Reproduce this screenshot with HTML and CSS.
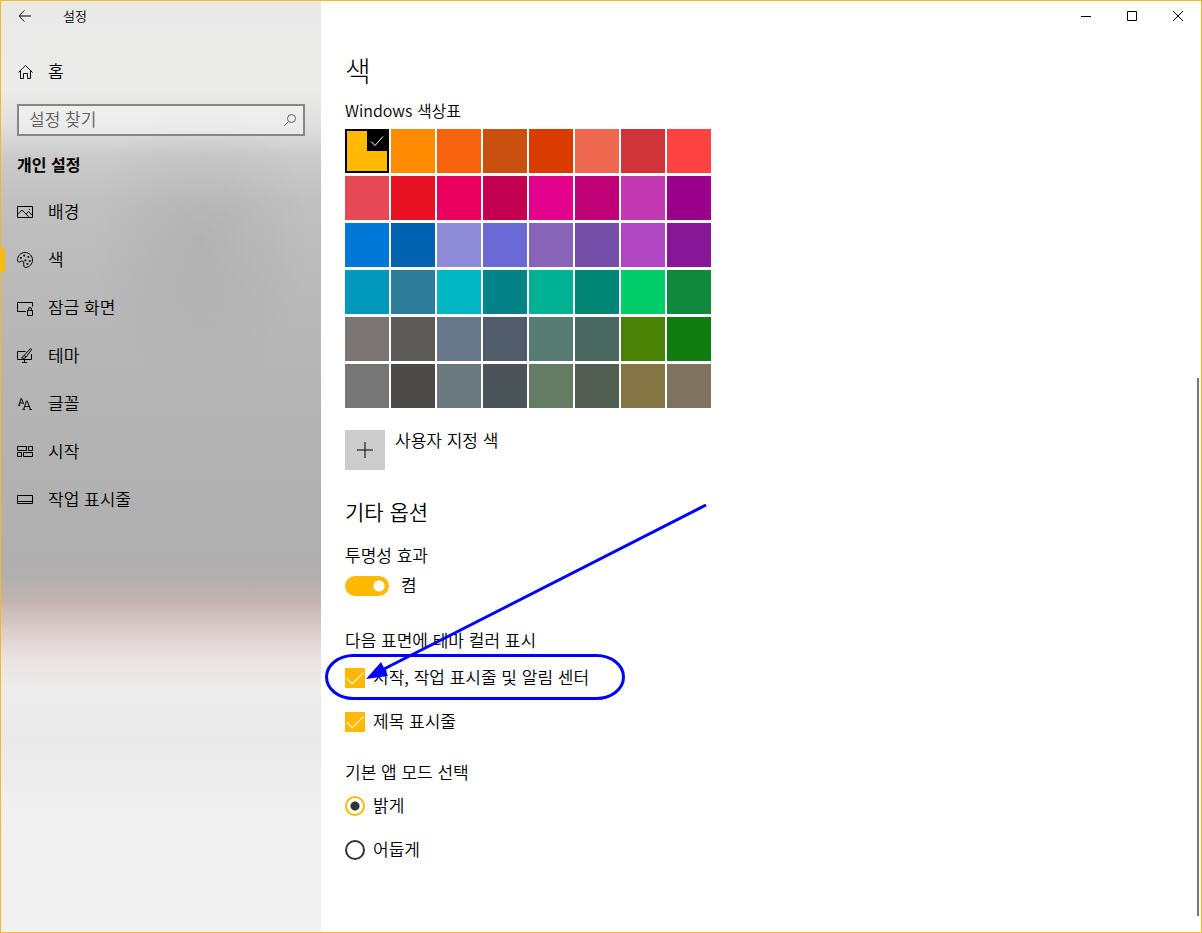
FILE: index.html
```html
<!DOCTYPE html>
<html lang="ko">
<head>
<meta charset="utf-8">
<meta name="viewport" content="width=device-width, initial-scale=1">
<title>설정</title>
<link rel="stylesheet" href="styles.css">
</head>
<body>
<div class="window">
  <aside class="sidebar">
    <header class="app-bar">
      <button class="back" type="button" aria-label="뒤로">
        <svg width="14" height="12" viewBox="0 0 14 12"><path d="M13 6H1M6.500 .5L1 6l5.500 5.500"/></svg>
      </button>
      <span class="app-name">설정</span>
    </header>
    <a class="nav-item home" href="#">
      <svg class="icon" width="16" height="16" viewBox="0 0 16 16"><path d="M1.500 8.500L8.500 1.500l7 7M3.500 7v7.500h3v-5h4v5h3V7"/></svg>
      <span>홈</span>
    </a>
    <div class="search">
      <input class="search-box" type="text" placeholder="설정 찾기" aria-label="설정 찾기">
      <svg class="search-icon" width="14" height="14" viewBox="0 0 14 14"><circle cx="8.500" cy="5.500" r="4"/><path d="M5.500 8.500L1 13"/></svg>
    </div>
    <h2 class="nav-title">개인 설정</h2>
    <nav class="nav">
      <a class="nav-item" href="#">
        <svg class="icon" width="16" height="16" viewBox="0 0 16 16"><path d="M.5 2.500h15v11H.5zM1 10l4-4 7.500 7.500M9 10l2.500-2.500 4 4"/><path d="M12 5.500h1"/></svg>
        <span>배경</span>
      </a>
      <a class="nav-item current" href="#" aria-current="page">
        <svg class="icon" width="16" height="16" viewBox="0 0 16 16"><path d="M8.500 15.500c4-.3 7-3.500 7-7.500S12.300.5 8 .5.500 4 .5 8c0 1.500.8 2.300 2 2l2-.8c1.500-.5 2.500.3 2.300 1.800-.3 2 0 4.500 1.700 4.500z"/><path class="solid" d="M3 5h1.800v1.800H3zM6.300 2.800h1.800v1.800H6.300zM10.500 4h1.800v1.800h-1.800zM7.500 7.500h1.800v1.800H7.500zM11.800 8h1.800v1.800h-1.800zM9.500 11h1.800v1.800H9.500z"/></svg>
        <span>색</span>
      </a>
      <a class="nav-item" href="#">
        <svg class="icon" width="16" height="16" viewBox="0 0 16 16"><path d="M9 11.500H.5v-9h15v4M10.500 10.500h5v5h-5zM11.500 10.500v-1.500a1.500 1.500 0 0 1 3 0v1.500"/></svg>
        <span>잠금 화면</span>
      </a>
      <a class="nav-item" href="#">
        <svg class="icon" width="16" height="16" viewBox="0 0 16 16"><path d="M8.500 3.500h-8v8h14V6M7.500 12v2.500M5 14.500h5"/><path d="M7 7.500l6-6.500c1-.8 2 .2 1.300 1.200L9 9M7 7.500L9 9c-.5 1.500-2.500 1.500-4.500 1 1.300-.3 1.200-2 2.500-2.500z"/></svg>
        <span>테마</span>
      </a>
      <a class="nav-item" href="#">
        <svg class="icon" width="16" height="16" viewBox="0 0 16 16"><path d="M1 9.500h2M1.800 9.500L4.300 2l2.200 6M2.700 7h3"/><path d="M5.500 13.500h2.500M12 13.500h3M6.500 13.500l3-8.500h.8l3.200 8.500M8 10.500h4.300"/></svg>
        <span>글꼴</span>
      </a>
      <a class="nav-item" href="#">
        <svg class="icon" width="16" height="16" viewBox="0 0 16 16"><path d="M.5 2.500h9v4h-9zM11.500 2.500h4v4h-4zM.5 8.500h4v4h-4zM6.500 8.500h9v4h-9z"/></svg>
        <span>시작</span>
      </a>
      <a class="nav-item" href="#">
        <svg class="icon" width="16" height="16" viewBox="0 0 16 16"><path d="M.5 3.500h15v8H.5zM.5 9.500h15"/></svg>
        <span>작업 표시줄</span>
      </a>
    </nav>
  </aside>

  <div class="content">
    <div class="window-controls">
      <button type="button" aria-label="최소화"><svg width="10" height="10" viewBox="0 0 10 10"><path d="M0 5.500h10"/></svg></button>
      <button type="button" aria-label="최대화"><svg width="10" height="10" viewBox="0 0 10 10"><path d="M.5 .5h9v9h-9z"/></svg></button>
      <button type="button" aria-label="닫기"><svg width="10" height="10" viewBox="0 0 10 10"><path d="M0 0l10 10M10 0L0 10"/></svg></button>
    </div>
    <main class="page">
      <h1 class="page-title">색</h1>
      <h3 class="label palette-label">Windows 색상표</h3>
      <div class="palette">
        <button class="swatch selected" type="button" aria-label="색 1" aria-pressed="true" style="background-color:#ffb900"><svg class="tick" width="20" height="20" viewBox="0 0 20 20"><path d="M4 10.500l4 4 8-9"/></svg></button>
        <button class="swatch" type="button" aria-label="색 2" style="background-color:#ff8c00"></button>
        <button class="swatch" type="button" aria-label="색 3" style="background-color:#f7630c"></button>
        <button class="swatch" type="button" aria-label="색 4" style="background-color:#ca5010"></button>
        <button class="swatch" type="button" aria-label="색 5" style="background-color:#da3b01"></button>
        <button class="swatch" type="button" aria-label="색 6" style="background-color:#ef6950"></button>
        <button class="swatch" type="button" aria-label="색 7" style="background-color:#d13438"></button>
        <button class="swatch" type="button" aria-label="색 8" style="background-color:#ff4343"></button>
        <button class="swatch" type="button" aria-label="색 9" style="background-color:#e74856"></button>
        <button class="swatch" type="button" aria-label="색 10" style="background-color:#e81123"></button>
        <button class="swatch" type="button" aria-label="색 11" style="background-color:#ea005e"></button>
        <button class="swatch" type="button" aria-label="색 12" style="background-color:#c30052"></button>
        <button class="swatch" type="button" aria-label="색 13" style="background-color:#e3008c"></button>
        <button class="swatch" type="button" aria-label="색 14" style="background-color:#bf0077"></button>
        <button class="swatch" type="button" aria-label="색 15" style="background-color:#c239b3"></button>
        <button class="swatch" type="button" aria-label="색 16" style="background-color:#9a0089"></button>
        <button class="swatch" type="button" aria-label="색 17" style="background-color:#0078d7"></button>
        <button class="swatch" type="button" aria-label="색 18" style="background-color:#0063b1"></button>
        <button class="swatch" type="button" aria-label="색 19" style="background-color:#8e8cd8"></button>
        <button class="swatch" type="button" aria-label="색 20" style="background-color:#6b69d6"></button>
        <button class="swatch" type="button" aria-label="색 21" style="background-color:#8764b8"></button>
        <button class="swatch" type="button" aria-label="색 22" style="background-color:#744da9"></button>
        <button class="swatch" type="button" aria-label="색 23" style="background-color:#b146c2"></button>
        <button class="swatch" type="button" aria-label="색 24" style="background-color:#881798"></button>
        <button class="swatch" type="button" aria-label="색 25" style="background-color:#0099bc"></button>
        <button class="swatch" type="button" aria-label="색 26" style="background-color:#2d7d9a"></button>
        <button class="swatch" type="button" aria-label="색 27" style="background-color:#00b7c3"></button>
        <button class="swatch" type="button" aria-label="색 28" style="background-color:#038387"></button>
        <button class="swatch" type="button" aria-label="색 29" style="background-color:#00b294"></button>
        <button class="swatch" type="button" aria-label="색 30" style="background-color:#018574"></button>
        <button class="swatch" type="button" aria-label="색 31" style="background-color:#00cc6a"></button>
        <button class="swatch" type="button" aria-label="색 32" style="background-color:#10893e"></button>
        <button class="swatch" type="button" aria-label="색 33" style="background-color:#7a7574"></button>
        <button class="swatch" type="button" aria-label="색 34" style="background-color:#5d5a58"></button>
        <button class="swatch" type="button" aria-label="색 35" style="background-color:#68768a"></button>
        <button class="swatch" type="button" aria-label="색 36" style="background-color:#515c6b"></button>
        <button class="swatch" type="button" aria-label="색 37" style="background-color:#567c73"></button>
        <button class="swatch" type="button" aria-label="색 38" style="background-color:#486860"></button>
        <button class="swatch" type="button" aria-label="색 39" style="background-color:#498205"></button>
        <button class="swatch" type="button" aria-label="색 40" style="background-color:#107c10"></button>
        <button class="swatch" type="button" aria-label="색 41" style="background-color:#767676"></button>
        <button class="swatch" type="button" aria-label="색 42" style="background-color:#4c4a48"></button>
        <button class="swatch" type="button" aria-label="색 43" style="background-color:#69797e"></button>
        <button class="swatch" type="button" aria-label="색 44" style="background-color:#4a5459"></button>
        <button class="swatch" type="button" aria-label="색 45" style="background-color:#647c64"></button>
        <button class="swatch" type="button" aria-label="색 46" style="background-color:#525e54"></button>
        <button class="swatch" type="button" aria-label="색 47" style="background-color:#847545"></button>
        <button class="swatch" type="button" aria-label="색 48" style="background-color:#7e735f"></button>
      </div>
      <div class="custom">
        <button class="add" type="button" id="add-color" aria-labelledby="add-label"><svg width="16" height="16" viewBox="0 0 16 16"><path d="M0 8h16M8 0v16"/></svg></button>
        <label class="add-label" id="add-label" for="add-color">사용자 지정 색</label>
      </div>

      <h2 class="section-title">기타 옵션</h2>
      <h3 class="label">투명성 효과</h3>
      <label class="option toggle-row"><input class="toggle" type="checkbox" role="switch" checked><span>켬</span></label>

      <h3 class="label surfaces">다음 표면에 테마 컬러 표시</h3>
      <div class="options">
        <div class="marked">
          <label class="option"><input class="check" type="checkbox" checked><span>시작, 작업 표시줄 및 알림 센터</span></label>
          <svg class="annotation" width="390" height="200" viewBox="0 0 390 200" aria-hidden="true"><rect x="6.500" y="151.500" width="297" height="43" rx="27" ry="21.500"/><path d="M386 1L62 166"/><path class="head" d="M46 175l15-17 7 14z"/></svg>
        </div>
        <label class="option"><input class="check" type="checkbox" checked><span>제목 표시줄</span></label>
      </div>

      <h3 class="label mode">기본 앱 모드 선택</h3>
      <div class="options">
        <label class="option"><input class="radio" type="radio" name="mode" checked><span>밝게</span></label>
        <label class="option"><input class="radio" type="radio" name="mode"><span>어둡게</span></label>
      </div>
    </main>
    <div class="scroll-thumb"></div>
  </div>
</div>
</body>
</html>
```
FILE: styles.css
```css
* {
  box-sizing: border-box;
}

body {
  margin: 0;
  font: 17px/24px "Noto Sans CJK KR", "Noto Sans", sans-serif;
  font-weight: 350;
  color: #000;
  background: #fff;
}

h1, h2, h3 {
  margin: 0;
  font-size: inherit;
  font-weight: inherit;
}

button {
  padding: 0;
  border: 0;
  background: none;
}

a {
  color: inherit;
  text-decoration: none;
}

svg {
  display: block;
  fill: none;
  stroke: #000;
}

.window {
  display: flex;
  min-height: 100vh;
  border: 1px solid #f3b92b;
}

/* Sidebar */
.sidebar {
  flex: 0 0 320px;
  background:
    radial-gradient(ellipse 110px 150px at 200px 240px, rgba(0, 0, 0, 0.06), transparent),
    linear-gradient(#e9e9e8 0, #ebebea 90px, #dfdfdf 125px, #cbcbcb 155px, #c0c0c0 200px, #b9b9b9 300px, #b3b3b3 420px, #b0b0b0 540px, #b1afaf 575px, #c0b2b2 597px, #d2c1c1 617px, #e0d3d3 637px, #e8e4e3 660px, #ececec 690px, #e9e9e9 740px, #f0f0f0 810px, #f1f1f1 932px);
}

.app-bar {
  display: flex;
  align-items: center;
  gap: 31px;
  height: 30px;
  padding-left: 17px;
  font-size: 13px;
}

.nav-item {
  display: flex;
  align-items: center;
  gap: 15px;
  height: 48px;
  padding-left: 16px;
}

.nav-item span,
.option span {
  padding-bottom: 2px;
}

.home {
  margin-top: 17px;
}

.current {
  background: linear-gradient(#ffb900, #ffb900) 0 50% / 4px 24px no-repeat;
}

.search {
  position: relative;
  margin: 8px 16px 0;
}

.search-box {
  display: block;
  width: 100%;
  height: 32px;
  padding: 0 36px 4px 10px;
  border: 2px solid #868686;
  border-radius: 0;
  background: rgba(255, 255, 255, 0.4);
  font: inherit;
}

.search-box::placeholder {
  color: #606060;
  opacity: 1;
}

.search-icon {
  position: absolute;
  top: 9px;
  right: 8px;
  stroke: #666;
}

.nav-title {
  margin: 16px 0 12px;
  padding-left: 16px;
  font-size: 16px;
  font-weight: 700;
}

.solid {
  fill: #000;
  stroke: none;
}

/* Content */
.content {
  position: relative;
  flex: 1;
  min-width: 0;
}

.window-controls {
  display: flex;
  justify-content: flex-end;
}

.window-controls button {
  display: grid;
  place-items: center;
  width: 46px;
  height: 30px;
}

.page {
  padding: 19px 24px 72px;
}

.page-title {
  font-size: 28px;
  font-weight: 300;
  line-height: 40px;
  margin-bottom: 8px;
}

.palette-label {
  font-size: 16px;
}

.palette {
  display: grid;
  grid-template-columns: repeat(8, 44px);
  grid-auto-rows: 44px;
  gap: 3px 2px;
  margin-top: 7px;
}

.selected {
  display: flex;
  justify-content: flex-end;
  align-items: flex-start;
  border: 2px solid #000;
}

.tick {
  background: #000;
  stroke: #fff;
}

.custom {
  display: flex;
  align-items: flex-start;
  gap: 10px;
  margin-top: 22px;
}

.add {
  display: grid;
  place-items: center;
  width: 40px;
  height: 40px;
  background: #ccc;
}

.add-label {
  line-height: 20px;
}

.section-title {
  margin: 25px 0 16px;
  font-size: 21px;
  line-height: 32px;
}

.option {
  display: flex;
  align-items: center;
  gap: 8px;
  height: 20px;
  width: fit-content;
}

.toggle-row {
  gap: 12px;
  margin-top: 9px;
}

.surfaces {
  margin-top: 32px;
}

.mode {
  margin-top: 28px;
}

.options {
  display: grid;
  gap: 24px;
  margin-top: 16px;
}

.mode + .options {
  margin-top: 12px;
}

input[type="checkbox"],
input[type="radio"] {
  appearance: none;
  flex: none;
  width: 20px;
  height: 20px;
  margin: 0;
}

input.toggle[type="checkbox"] {
  width: 44px;
  border-radius: 10px;
  background: radial-gradient(circle at 34px 10px, #fff 5px, #ffb900 6px);
}

.check {
  display: grid;
  place-items: center;
  border: 1px solid #ffb900;
}

.check:checked {
  background: #ffb900;
}

.check:checked::before {
  content: "";
  width: 15px;
  height: 7px;
  margin-bottom: 5px;
  border: solid #fff;
  border-width: 0 0 1px 1px;
  rotate: -45deg;
}

.radio {
  border: 2px solid #333;
  border-radius: 50%;
}

.radio:checked {
  border-color: #ffb900;
  background: radial-gradient(circle, #333 4px, transparent 5px);
}

.marked {
  position: relative;
}

.annotation {
  position: absolute;
  left: -25px;
  top: -164px;
  stroke: #00f;
  stroke-width: 3;
  pointer-events: none;
}

.head {
  fill: #00f;
  stroke: none;
}

.scroll-thumb {
  position: absolute;
  top: 377px;
  bottom: 16px;
  right: 2px;
  width: 2px;
  background: #777;
}
```
